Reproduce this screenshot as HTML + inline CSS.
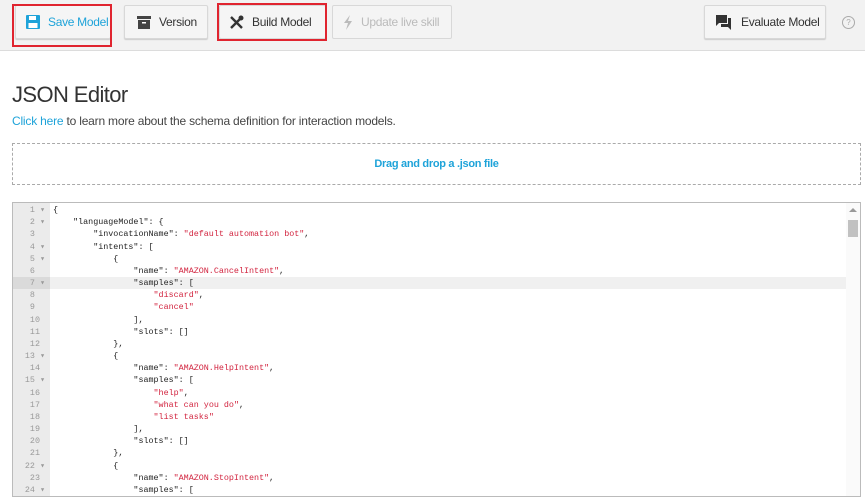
<!DOCTYPE html>
<html><head><meta charset="utf-8"><style>
body{margin:0;width:865px;height:504px;background:#fff;font-family:"Liberation Sans",sans-serif;overflow:hidden;position:relative}
.bar{position:absolute;left:0;top:0;width:865px;height:50px;background:#f2f2f2;border-bottom:1px solid #dcdcdc}
.btn{position:absolute;top:5px;height:34px;background:#f5f5f5;border:1px solid #d8d8d8;border-radius:2px;box-shadow:0 1px 1px #ccc;font-size:12px;letter-spacing:-0.3px;white-space:nowrap;color:#333;display:flex;align-items:center;box-sizing:border-box}
.btn svg{margin:0 8px 0 0;flex:none}
.red{position:absolute;border:2px solid #e0242f;box-sizing:border-box}
h1{position:absolute;left:12px;top:82px;margin:0;font-weight:normal;font-size:22px;letter-spacing:-0.6px;color:#333}
.p{position:absolute;left:12px;top:114px;font-size:12px;letter-spacing:-0.2px;color:#444}
.p a{color:#1ea3d9;text-decoration:none}
.drop{position:absolute;left:12px;top:143px;width:849px;height:42px;border:1px dashed #aaa;box-sizing:border-box;text-align:center;line-height:40px;font-size:11px;letter-spacing:-0.3px;font-weight:bold;color:#1ea3d9}
.ed{position:absolute;left:12px;top:202px;width:849px;height:295px;border:1px solid #bbb;box-sizing:border-box;overflow:hidden}
.gut{position:absolute;left:0;top:0;width:37px;height:100%;background:#ebebeb}
pre{position:absolute;left:0;top:1px;margin:0;font-family:"Liberation Mono",monospace;font-size:8.4px;line-height:12.17px;color:#222}
.ln{display:inline-block;width:32px;text-align:right;color:#999;padding-right:8px}
.s{color:#d2243f}
.act{position:absolute;left:0;top:74px;width:833px;height:12px;background:#f0f0f0}
.act2{position:absolute;left:0;top:74px;width:37px;height:12px;background:#dadada}
.sb{position:absolute;right:0;top:0;width:14px;height:100%;background:#fafafa}
.th{position:absolute;right:2px;top:17px;width:10px;height:17px;background:#c1c1c1}
</style></head><body>
<div class="bar"></div>
<div class="btn" style="left:15px;width:96px;padding-left:10px;color:#1ea3d9"><svg width="14" height="14" viewBox="0 0 14 14"><rect x="0" y="0" width="14" height="14" rx="1" fill="#1ea3d9"/><rect x="3" y="1" width="7" height="4" fill="#fff"/><rect x="2.5" y="8" width="9" height="5" fill="#fff"/></svg>Save Model</div>
<div class="red" style="left:12px;top:4px;width:100px;height:43px"></div>
<div class="btn" style="left:124px;width:84px;padding-left:12px"><svg width="14" height="13" viewBox="0 0 14 13"><rect x="0" y="0" width="14" height="3" fill="#444"/><rect x="1" y="4" width="12" height="9" fill="#444"/><rect x="5" y="6" width="4" height="1.5" fill="#fff"/></svg>Version</div>
<div class="btn" style="left:219px;width:107px;padding-left:9px"><svg width="15" height="15" viewBox="0 0 15 15"><path d="M2 2L13 13M13 2L2 13" stroke="#333" stroke-width="2.4"/><circle cx="12" cy="3" r="2.5" fill="#333"/></svg>Build Model</div>
<div class="red" style="left:217px;top:3px;width:110px;height:38px"></div>
<div class="btn" style="left:332px;width:120px;padding-left:10px;color:#bbb;background:#f4f4f4;box-shadow:none"><svg width="10" height="15" viewBox="0 0 10 15"><path d="M7 0L1 8h4L3 15 9 6H5z" fill="#bbb"/></svg>Update live skill</div>
<div class="btn" style="left:704px;width:122px;padding-left:11px"><svg width="17" height="15" viewBox="0 0 17 15"><path d="M0 0h11v8H3L0 11z" fill="#333"/><path d="M12 3h3v12l-3-3H5V9h7z" fill="#333"/></svg>Evaluate Model</div>
<div style="position:absolute;left:842px;top:16px;width:11px;height:11px;border:1px solid #aaa;border-radius:50%;font-size:8px;color:#aaa;text-align:center;line-height:11px">?</div>
<h1>JSON Editor</h1>
<div class="p"><a>Click here</a> to learn more about the schema definition for interaction models.</div>
<div class="drop">Drag and drop a .json file</div>
<div class="ed"><div class="gut"></div><div class="act"></div><div class="act2"></div>
<pre><span class="ln">1 ▾</span>{
<span class="ln">2 ▾</span>    "languageModel": {
<span class="ln">3  </span>        "invocationName": <span class="s">"default automation bot"</span>,
<span class="ln">4 ▾</span>        "intents": [
<span class="ln">5 ▾</span>            {
<span class="ln">6  </span>                "name": <span class="s">"AMAZON.CancelIntent"</span>,
<span class="ln">7 ▾</span>                "samples": [
<span class="ln">8  </span>                    <span class="s">"discard"</span>,
<span class="ln">9  </span>                    <span class="s">"cancel"</span>
<span class="ln">10 </span>                ],
<span class="ln">11 </span>                "slots": []
<span class="ln">12 </span>            },
<span class="ln">13 ▾</span>            {
<span class="ln">14 </span>                "name": <span class="s">"AMAZON.HelpIntent"</span>,
<span class="ln">15 ▾</span>                "samples": [
<span class="ln">16 </span>                    <span class="s">"help"</span>,
<span class="ln">17 </span>                    <span class="s">"what can you do"</span>,
<span class="ln">18 </span>                    <span class="s">"list tasks"</span>
<span class="ln">19 </span>                ],
<span class="ln">20 </span>                "slots": []
<span class="ln">21 </span>            },
<span class="ln">22 ▾</span>            {
<span class="ln">23 </span>                "name": <span class="s">"AMAZON.StopIntent"</span>,
<span class="ln">24 ▾</span>                "samples": [
</pre>
<div class="sb"><div style="position:absolute;left:3px;top:5px;border:4px solid transparent;border-bottom:4px solid #999;border-top:0"></div><div class="th"></div></div>
</div>
</body></html>
